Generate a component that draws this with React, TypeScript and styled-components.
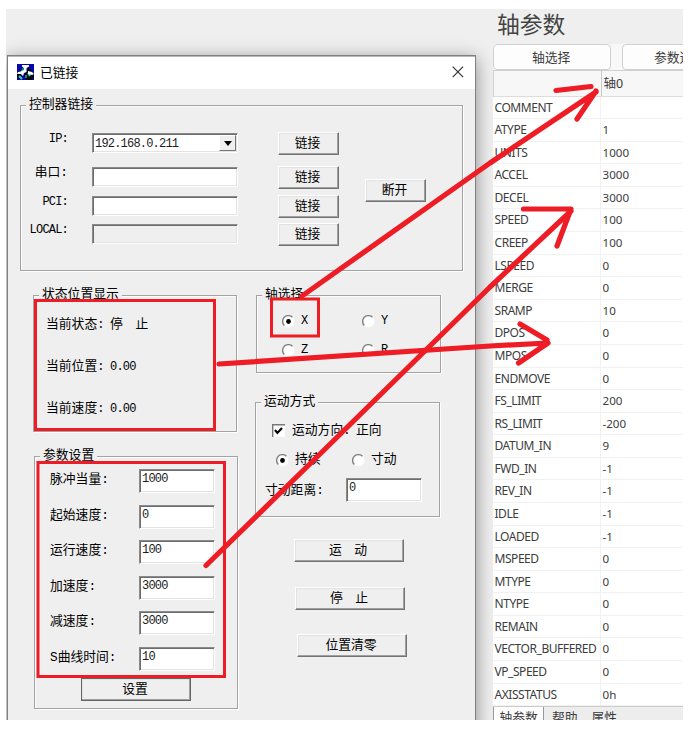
import React from 'react';
import styled, { createGlobalStyle, css } from 'styled-components';

const GlobalStyle = createGlobalStyle`
  * { box-sizing: border-box; }
  body { margin: 0; background: #fff; }
`;

const cjk = `'Noto Sans CJK SC', sans-serif`;
const face = '#efefef';
const red = '#ee1c24';

const Page = styled.div`
  width: 693px;
  height: 732px;
  padding: 9px 10px 12px 6px;
  background: #fff;
  position: relative;
  overflow: hidden;
`;
const Desktop = styled.main`
  width: 677px;
  height: 711px;
  display: flex;
  overflow: hidden;
  background: ${face};
`;

/* Dialog window */
const Dialog = styled.section`
  flex: none;
  width: 469px;
  height: 680px;
  margin: 46px 17px 0 1px;
  border: 1px solid #808080;
  box-shadow: 0 4px 17px rgba(0, 0, 0, 0.42);
  background: ${face};
  font: 12.8px/16px 'Liberation Mono', ${cjk};
  color: #000;
`;
const TitleBar = styled.header`
  height: 33px;
  display: flex;
  align-items: center;
  padding: 0 11px 2px 9px;
  background: #fff;
  border-top: 1px solid #b8b8b8;
  font-family: ${cjk};
`;
const Title = styled.h1`
  flex: 1;
  margin: 0 0 0 6px;
  font-size: 12.8px;
  font-weight: 400;
`;
const Latin = styled.span`
  font: 12px/16px 'Liberation Mono', monospace;
  letter-spacing: -0.8px;
`;
const Group = styled.fieldset<{ $h: number; $w: number }>`
  display: block;
  min-width: 0;
  width: ${p => p.$w}px;
  height: ${p => p.$h}px;
  margin: 0;
  padding: 0;
  border: 0;
  outline: 1px solid #a3a3a3;
  outline-offset: -1px;
  box-shadow: 1px 1px 0 #fff, inset 2px 2px 0 #fbfbfb;
`;
const Legend = styled.div`
  width: fit-content;
  height: 16px;
  margin: -8px 0 0 6px;
  padding: 0 3px;
  position: relative;
  background: ${face};
  white-space: nowrap;
`;
const Button = styled.button<{ $w?: number; $default?: boolean }>`
  display: block;
  width: ${p => p.$w ?? 61}px;
  height: 23px;
  padding: 0 2px 3px 0;
  border: 1px solid;
  border-color: #fff #737373 #737373 #fff;
  ${p => p.$default && css`border-color: #666;`}
  box-shadow: inset -1px -1px 0 #a0a0a0, inset 1px 1px 0 #e3e3e3;
  background: ${face};
  font: 12.8px/18px ${cjk};
  color: #000;
  white-space: pre;
  word-spacing: 1.3px;
`;
const Field = styled.div<{ $w?: number; $h?: number; $off?: boolean }>`
  display: flex;
  justify-content: space-between;
  width: ${p => p.$w ?? 76}px;
  height: ${p => p.$h ?? 24}px;
  border: 1px solid;
  border-color: #8a8a8a #fff #fff #8a8a8a;
  box-shadow: inset 1px 1px 0 #6d6d6d, inset -1px -1px 0 #e3e3e3;
  background: ${p => (p.$off ? face : '#fff')};
  padding-left: 2px;
  font: 12px/${p => (p.$h ? 20 : 18)}px 'Liberation Mono', monospace;
  letter-spacing: -0.8px;
  color: #1c1c1c;
`;
const DropButton = styled.div`
  width: 17px;
  height: 16px;
  margin: 1px 1px 0 0;
  display: grid;
  place-items: center;
  background: ${face};
  border: 1px solid;
  border-color: #fff #777 #777 #fff;
`;

const Connections = styled.div`
  display: flex;
  padding: 20px 0 0 9px;
`;
const ConnGrid = styled.div`
  display: grid;
  grid-template-columns: 39px 146px 61px;
  grid-template-rows: 34px 29px 28px 23px;
`;
const ConnLabel = styled.div`
  justify-self: end;
  height: 16px;
  margin-top: -2px;
  white-space: nowrap;
`;
const ConnField = styled.div`margin-left: 24px;`;
const ConnButton = styled.div`
  margin-left: 64px;
  margin-top: -1px;
`;
const Disconnect = styled.div`margin: 46px 0 0 90px;`;

const Columns = styled.div`
  display: flex;
  align-items: flex-start;
  padding: 24px 0 0 25px;
`;
const LeftColumn = styled.div`
  display: flex;
  flex-direction: column;
  gap: 24px;
  width: 223px;
`;
const RightColumn = styled.div`
  display: flex;
  flex-direction: column;
`;
const ParamGroup = styled.div`margin-left: 1px;`;
const StatusList = styled.div`
  display: grid;
  grid-auto-rows: 42px;
  padding: 12px 0 0 13px;
  white-space: pre;
`;
const ParamRow = styled.label`
  display: flex;
  width: 182px;
  height: 35.6px;
  margin-left: 16px;
  white-space: nowrap;
`;
const ParamLabel = styled.span`
  width: 89px;
  padding-top: 3px;
`;
const ParamList = styled.div`padding-top: 5px;`;
const SetButton = styled.div`margin: -5px 0 0 47px;`;

const RadioGrid = styled.div<{ $top: number; $left: number; $col: number }>`
  display: grid;
  grid-template-columns: ${p => p.$col}px 80px;
  grid-auto-rows: 29px;
  padding: ${p => p.$top}px 0 0 ${p => p.$left}px;
`;
const Option = styled.label<{ $gap?: number }>`
  display: flex;
  align-items: center;
  gap: ${p => p.$gap ?? 6}px;
  height: 16px;
  white-space: pre;
`;
const CheckRow = styled.div`padding: 12px 0 0 17px;`;
const DistanceRow = styled.div`
  display: flex;
  padding: 0 0 0 10px;
  margin-top: -3px;
`;
const DistanceLabel = styled.span`
  width: 81px;
  padding-top: 5px;
`;
const MotionGroup = styled.div`margin: 29px 0 0 -1px;`;
const Actions = styled.div`
  display: grid;
  grid-auto-rows: 47.6px;
  padding-top: 22px;
`;
const Action = styled.div<{ $x: number }>`margin-left: ${p => p.$x}px;`;

/* Axis parameter panel */
const Panel = styled.aside`
  position: relative;
  flex: none;
  width: 190px;
  height: 711px;
  background: #fff;
  font: 12px/22px 'Noto Sans', ${cjk};
  color: #3c3c3c;
  overflow: hidden;
`;
const PanelTitle = styled.h2`
  height: 35px;
  margin: 0;
  padding-left: 4px;
  background: ${face};
  font: 400 22.8px/29px ${cjk};
  color: #444;
`;
const Toolbar = styled.div`
  display: flex;
  gap: 11px;
  height: 26px;
  background: #f8f8f8;
`;
const ToolButton = styled.div<{ $pad?: number }>`
  flex: none;
  width: 118px;
  height: 26px;
  border: 1px solid #d0d0d0;
  border-radius: 4px;
  background: #fdfdfd;
  font: 12.8px/24px ${cjk};
  padding-left: ${p => p.$pad ?? 38}px;
  white-space: nowrap;
  overflow: hidden;
`;
const Row = styled.div<{ $head?: boolean }>`
  display: grid;
  grid-template-columns: 108px 1fr;
  height: ${p => (p.$head ? 26.6 : 22.58)}px;
  background: ${p => (p.$head ? '#f7f7f7' : '#fff')};
  border-bottom: 1px solid ${p => (p.$head ? '#ddd' : '#f1f1f1')};
  ${p => p.$head && css`border-top: 1px solid #d0d0d0; border-left: 1px solid #d0d0d0;`}
`;
const Cell = styled.div<{ $head?: boolean; $name?: boolean }>`
  padding-left: ${p => (p.$head ? 1.5 : p.$name ? 1.5 : 1.5)}px;
  border-right: ${p => (p.$name ? `1px solid ${p.$head ? '#c8c8c8' : '#f1f1f1'}` : '0')};
  white-space: nowrap;
  font-size: ${p => (p.$head ? 12.5 : p.$name ? 12 : 11.6)}px;
  line-height: ${p => (p.$head ? 25 : 22)}px;
  letter-spacing: ${p => (p.$name ? '-0.45px' : '0')};
`;
const Tabs = styled.div`
  display: flex;
  height: 24px;
  background: #ededed;
  border-top: 1px solid #ccc;
  font: 12.8px/20px ${cjk};
`;
const Tab = styled.div<{ $active?: boolean }>`
  padding: 0 5.5px;
  background: ${p => (p.$active ? '#fff' : 'transparent')};
  border-left: 1px solid ${p => (p.$active ? '#999' : 'transparent')};
  border-right: 1px solid ${p => (p.$active ? '#999' : 'transparent')};
  margin-right: 1px;
`;
const Overlay = styled.svg`
  position: absolute;
  left: 0;
  top: 0;
  pointer-events: none;
`;

const AppIcon = () => (
  <svg width="17" height="16" viewBox="0 0 17 16">
    <path fill="#0808a8" d="M0 0h17v16H0z" />
    <path fill="#050808" d="M0 9 5 5l2 2-3 4 2 4H2l-2-3zM9 6l3-2 5 6v4l-3 2h-4l-3-4z" />
    <path stroke="#38c8c8" strokeWidth="2.2" d="M7.500 4 4.500 8M2 12l3 3M11 9l2 3" />
    <path fill="#fff" d="M5 1h7v1.500L9.500 4v4L7 9 6 12l-2-2-4 0 1-2 5-1 1-3-2-1.500zM11 7l4 1 2 2-2 1-4-1z" />
    <path fill="#168888" d="M8 11h2v3H8zM5 4h2v2H5z" />
  </svg>
);
const CloseIcon = () => (
  <svg width="12" height="12" viewBox="0 0 12 12">
    <path d="m.7.7 10.4 10.4M11.1.7.7 11.1" stroke="#333" strokeWidth="1.2" />
  </svg>
);
const Radio = ({ on }: { on?: boolean }) => (
  <svg width="13" height="13" viewBox="0 0 13 13">
    <circle cx="6.5" cy="6.5" r="5.5" fill="#fff" stroke="#fff" />
    <path d="M2.3 10.4A5.5 5.5 0 0 1 10.4 2.3" fill="none" stroke="#808080" strokeWidth="1.4" />
    {on && <circle cx="6.5" cy="6.5" r="2.4" fill="#000" />}
  </svg>
);
const Check = () => (
  <svg width="13" height="13" viewBox="0 0 13 13">
    <path fill="#fff" d="M0 0h13v13H0z" />
    <path d="M.7 13V.7H13" fill="none" stroke="#777" strokeWidth="1.4" />
    <path d="m3 6 2.4 3L10 4" fill="none" stroke="#000" strokeWidth="2.1" />
  </svg>
);

const connections = [
  { label: 'IP:', value: '192.168.0.211', combo: true },
  { label: '串口:', han: true },
  { label: 'PCI:' },
  { label: 'LOCAL:', off: true },
];
const params = [
  ['脉冲当量:', '1000'], ['起始速度:', '0'], ['运行速度:', '100'],
  ['加速度:', '3000'], ['减速度:', '3000'], ['S曲线时间:', '10'],
];
const axisParams = [
  ['COMMENT', ''], ['ATYPE', '1'], ['UNITS', '1000'], ['ACCEL', '3000'], ['DECEL', '3000'],
  ['SPEED', '100'], ['CREEP', '100'], ['LSPEED', '0'], ['MERGE', '0'], ['SRAMP', '10'],
  ['DPOS', '0'], ['MPOS', '0'], ['ENDMOVE', '0'], ['FS_LIMIT', '200'], ['RS_LIMIT', '-200'],
  ['DATUM_IN', '9'], ['FWD_IN', '-1'], ['REV_IN', '-1'], ['IDLE', '-1'], ['LOADED', '-1'],
  ['MSPEED', '0'], ['MTYPE', '0'], ['NTYPE', '0'], ['REMAIN', '0'], ['VECTOR_BUFFERED', '0'],
  ['VP_SPEED', '0'], ['AXISSTATUS', '0h'],
];

const BigLabel = styled.span`
  font-family: 'Liberation Mono', ${cjk};
  font-size: 12.8px;
`;
const Text = styled.span`
  font: 12px/16px 'Liberation Mono', ${cjk};
  letter-spacing: -0.8px;
`;
const Han = styled.span`
  font: 12.8px/16px ${cjk};
  letter-spacing: 0;
`;
const ConnectionArea = styled.div`padding: 16px 0 0 12px;`;

const ConnectionGroup = () => (
  <Group $w={443} $h={166}>
    <Legend>控制器链接</Legend>
    <Connections>
      <ConnGrid>
        {connections.map(c => (
          <React.Fragment key={c.label}>
            <ConnLabel>
              {c.han ? <BigLabel>{c.label}</BigLabel> : <Latin>{c.label}</Latin>}
            </ConnLabel>
            <ConnField>
              <Field $w={146} $h={20} $off={c.off}>
                {c.value}
                {c.combo && (
                  <DropButton>
                    <svg width="8" height="5"><path d="M0 0h8L4 5z" /></svg>
                  </DropButton>
                )}
              </Field>
            </ConnField>
            <ConnButton><Button>链接</Button></ConnButton>
          </React.Fragment>
        ))}
      </ConnGrid>
      <Disconnect><Button>断开</Button></Disconnect>
    </Connections>
  </Group>
);

const Annotations = () => (
  <Overlay width="693" height="732" viewBox="0 0 693 732" fill="none" stroke={red}>
    <g strokeWidth="3">
      <path d="M35.5 300.5h179v129h-179z" />
      <path d="M271.5 299h47v37h-47z" />
      <path d="M38 462.5h186.500v214H38z" />
    </g>
    <g strokeWidth="5.2" strokeLinecap="round" strokeLinejoin="round">
      <path d="M302 296 490 163 596 92M556 90.500 591 86.500M596 91 577 119" />
      <path d="M219 364 490 346 548 343M520 324 547 340M548 343 518.500 363" />
      <path d="M206 565.500 320 454 490 287 571 211M523.500 209H571L557 246" />
    </g>
  </Overlay>
);

export default function App() {
  return (
    <Page>
      <GlobalStyle />
      <Desktop>
        <Dialog>
          <TitleBar>
            <AppIcon />
            <Title>已链接</Title>
            <CloseIcon />
          </TitleBar>
          <ConnectionArea><ConnectionGroup /></ConnectionArea>
          <Columns>
            <LeftColumn>
              <Group $w={204} $h={137}>
                <Legend>状态位置显示</Legend>
                <StatusList>
                  <Text><Han>当前状态</Han>: <Han>停</Han>  <Han>止</Han></Text>
                  <Text><Han>当前位置</Han>: 0.00</Text>
                  <Text><Han>当前速度</Han>: 0.00</Text>
                </StatusList>
              </Group>
              <ParamGroup>
                <Group $w={204} $h={253}>
                  <Legend>参数设置</Legend>
                  <ParamList>
                    {params.map(([name, value]) => (
                      <ParamRow key={name}>
                        <ParamLabel>{name}</ParamLabel>
                        <Field>{value}</Field>
                      </ParamRow>
                    ))}
                  </ParamList>
                  <SetButton><Button $w={110} $default>设置</Button></SetButton>
                </Group>
              </ParamGroup>
            </LeftColumn>
            <RightColumn>
              <Group $w={185} $h={78}>
                <Legend>轴选择</Legend>
                <RadioGrid $top={10} $left={26} $col={80}>
                  {['X', 'Y', 'Z', 'R'].map(a => (
                    <Option key={a}><Radio on={a === 'X'} /><Latin>{a}</Latin></Option>
                  ))}
                </RadioGrid>
              </Group>
              <MotionGroup>
                <Group $w={185} $h={115}>
                  <Legend>运动方式</Legend>
                  <CheckRow>
                    <Option $gap={7}><Check /><Text><Han>运动方向</Han>: <Han>正向</Han></Text></Option>
                  </CheckRow>
                  <RadioGrid $top={14} $left={21} $col={76}>
                    <Option><Radio on />持续</Option>
                    <Option><Radio />寸动</Option>
                  </RadioGrid>
                  <DistanceRow>
                    <DistanceLabel>寸动距离:</DistanceLabel>
                    <Field>0</Field>
                  </DistanceRow>
                </Group>
              </MotionGroup>
              <Actions>
                <Action $x={38}><Button $w={110}>运   动</Button></Action>
                <Action $x={39}><Button $w={110}>停   止</Button></Action>
                <Action $x={41}><Button $w={110}>位置清零</Button></Action>
              </Actions>
            </RightColumn>
          </Columns>
        </Dialog>
        <Panel>
          <PanelTitle>轴参数</PanelTitle>
          <Toolbar>
            <ToolButton>轴选择</ToolButton>
            <ToolButton $pad={31}>参数选择</ToolButton>
          </Toolbar>
          <Row $head><Cell $head $name /><Cell $head>轴0</Cell></Row>
          {axisParams.map(([name, value]) => (
            <Row key={name}><Cell $name>{name}</Cell><Cell>{value}</Cell></Row>
          ))}
          <Tabs><Tab $active>轴参数</Tab><Tab>帮助</Tab><Tab>属性</Tab></Tabs>
        </Panel>
      </Desktop>
      <Annotations />
    </Page>
  );
}
